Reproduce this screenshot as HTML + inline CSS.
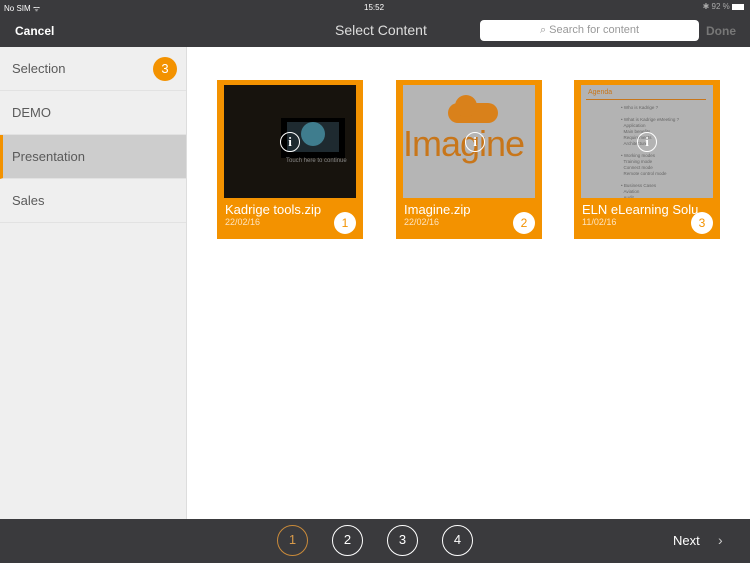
<!DOCTYPE html>
<html><head><style>
*{margin:0;padding:0;box-sizing:border-box}
body{width:750px;height:563px;position:relative;overflow:hidden;background:#fff;font-family:"Liberation Sans",sans-serif}
.top{position:absolute;left:0;top:0;width:750px;height:47px;background:#3a3a3d;color:#fff}
.side{position:absolute;left:0;top:47px;width:187px;height:472px;background:#efefef;border-right:1px solid #ddd}
.row{height:44px;border-bottom:1px solid #e2e2e2;font-size:13px;color:#5a5a5a;line-height:44px;padding-left:12px;position:relative}
.sel{background:#cdcdcd;border-left:3px solid #f39200;padding-left:9px}
.badge{position:absolute;right:9px;top:10px;width:24px;height:24px;border-radius:50%;background:#f39200;color:#fff;text-align:center;line-height:24px;font-size:13px}
.card{position:absolute;top:80px;width:146px;height:159px;background:#f39200}
.img{position:absolute;left:7px;top:5px;width:132px;height:113px;overflow:hidden}
.t{position:absolute;left:8px;top:122px;color:#fff;font-size:13px;white-space:nowrap;width:124px;overflow:hidden}
.d{position:absolute;left:8px;top:137px;color:#fde3bd;font-size:9px}
.n{position:absolute;right:7px;top:132px;width:22px;height:22px;border-radius:50%;background:#fff;color:#f39200;text-align:center;line-height:22px;font-size:12px}
.i{position:absolute;width:20px;height:20px;border:1.5px solid #fff;border-radius:50%;color:#fff;font-size:13px;font-weight:bold;text-align:center;line-height:17px;font-family:"Liberation Serif",serif}
.bot{position:absolute;left:0;top:519px;width:750px;height:44px;background:#3a3a3d}
.pg{position:absolute;top:6px;width:31px;height:31px;border:1.5px solid #fff;border-radius:50%;color:#fff;text-align:center;line-height:28px;font-size:13px}
</style></head><body>
<div class="top">
<div style="position:absolute;left:4px;top:3px;font-size:8px">No SIM ᯤ</div>
<div style="position:absolute;left:364px;top:3px;font-size:8px">15:52</div>
<div style="position:absolute;right:6px;top:2px;font-size:8px;color:#aaa">✱ 92 % <span style="display:inline-block;width:12px;height:6px;background:#fff;vertical-align:middle"></span></div>
<div style="position:absolute;left:15px;top:24px;font-size:12px;font-weight:bold">Cancel</div>
<div style="position:absolute;left:335px;top:22px;font-size:14px;color:#ddd">Select Content</div>
<div style="position:absolute;left:480px;top:20px;width:219px;height:21px;background:#fff;border-radius:4px;color:#999;font-size:11px;text-align:center;line-height:21px">⌕ Search for content</div>
<div style="position:absolute;left:706px;top:24px;font-size:12px;font-weight:bold;color:#777">Done</div>
</div>
<div class="side">
<div class="row">Selection<span class="badge">3</span></div>
<div class="row">DEMO</div>
<div class="row sel">Presentation</div>
<div class="row">Sales</div>
</div>
<div class="card" style="left:217px"><div class="img" style="background:#17130d">
<div style="position:absolute;left:57px;top:33px;width:64px;height:40px;background:#000"><div style="position:absolute;left:6px;top:4px;width:52px;height:30px;background:#1e2a30"></div><div style="position:absolute;left:20px;top:4px;width:24px;height:24px;border-radius:50%;background:#3f7d8e"></div></div>
<div style="position:absolute;left:62px;top:73px;font-size:6px;color:#888">Touch here to continue</div>
<div class="i" style="left:56px;top:47px">i</div></div>
<div class="t">Kadrige tools.zip</div><div class="d">22/02/16</div><div class="n">1</div></div>
<div class="card" style="left:396px"><div class="img" style="background:#b5b5b5">
<div style="position:absolute;left:45px;top:18px;width:50px;height:20px;border-radius:12px;background:#d9811b"></div>
<div style="position:absolute;left:52px;top:10px;width:22px;height:22px;border-radius:50%;background:#d9811b"></div>
<div style="position:absolute;left:0px;top:38px;font-size:36px;color:#c8761a;letter-spacing:-1px">Imagine</div>
<div class="i" style="left:62px;top:47px">i</div></div>
<div class="t">Imagine.zip</div><div class="d">22/02/16</div><div class="n">2</div></div>
<div class="card" style="left:574px"><div class="img" style="background:#b3b3b3">
<div style="position:absolute;left:7px;top:4px;font-size:7px;color:#c8761a">Agenda</div>
<div style="position:absolute;left:5px;top:14px;width:120px;height:1px;background:#c8761a"></div>
<div style="position:absolute;left:40px;top:20px;font-size:4.5px;line-height:6px;color:#666">• Who is Kadrige ?<br><br>• What is Kadrige eMeeting ?<br>&nbsp;&nbsp;Application<br>&nbsp;&nbsp;Main benefits<br>&nbsp;&nbsp;Requirements<br>&nbsp;&nbsp;Architecture<br><br>• Working modes<br>&nbsp;&nbsp;Training mode<br>&nbsp;&nbsp;Connect mode<br>&nbsp;&nbsp;Remote control mode<br><br>• Business Cases<br>&nbsp;&nbsp;Aviation<br>&nbsp;&nbsp;Audit</div>
<div class="i" style="left:56px;top:47px">i</div></div>
<div class="t">ELN eLearning Solu...</div><div class="d">11/02/16</div><div class="n">3</div></div>
<div class="bot">
<div class="pg" style="left:277px;border-color:#c98a3a;color:#d99a4a">1</div>
<div class="pg" style="left:332px">2</div>
<div class="pg" style="left:387px">3</div>
<div class="pg" style="left:442px">4</div>
<div style="position:absolute;left:673px;top:14px;color:#fff;font-size:13px">Next</div>
<div style="position:absolute;left:718px;top:13px;color:#ccc;font-size:14px">›</div>
</div>
</body></html>
